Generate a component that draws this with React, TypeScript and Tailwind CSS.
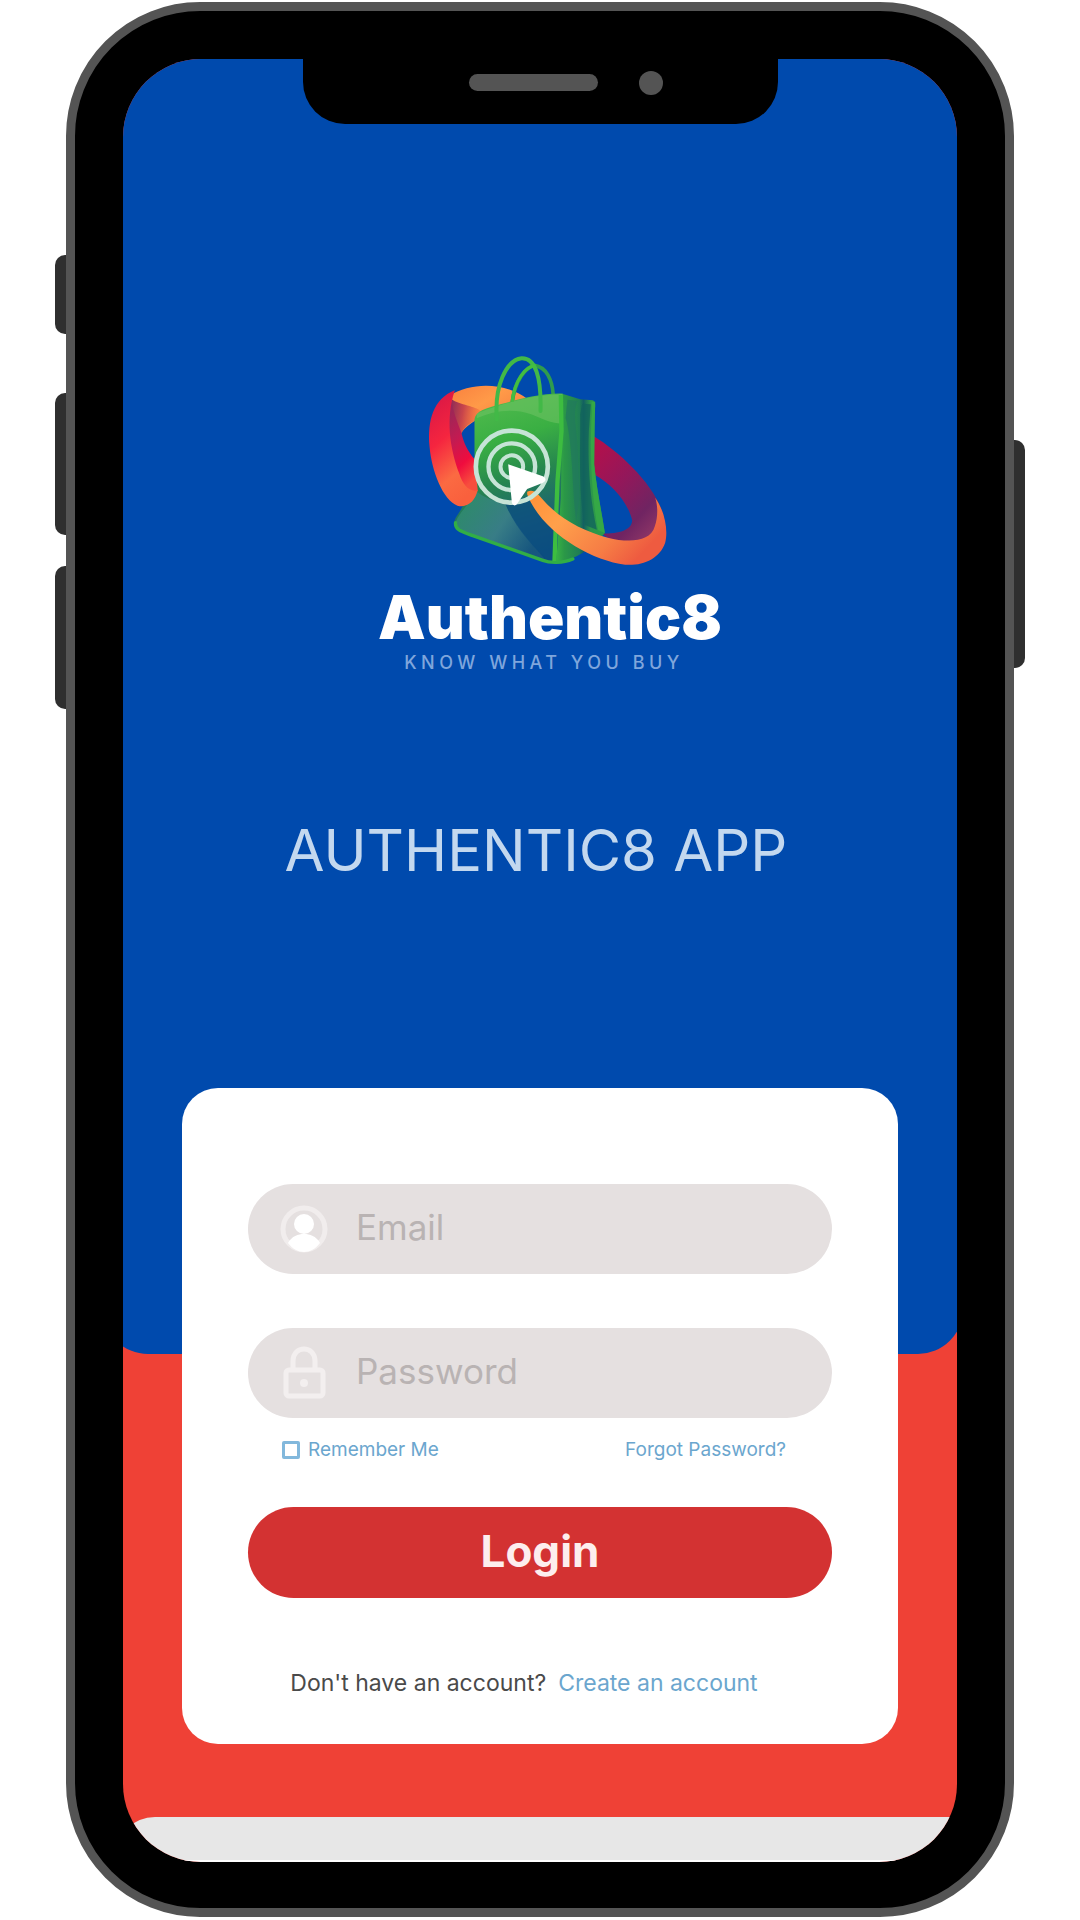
import React from "react";

function BrandMark() {
  return (
    <svg viewBox="200 60 740 651" className="h-[217px] w-[247px]" role="img" aria-label="Shopping bag with a click target and an orbiting ribbon">
      <defs>
        <linearGradient id="ringTop" x1="0" y1="0" x2="1" y2="1">
          <stop offset="0" stopColor="#f9803f" />
          <stop offset="0.4" stopColor="#ff9a48" />
          <stop offset="1" stopColor="#f1703e" />
        </linearGradient>
        <linearGradient id="ringShade" x1="0" y1="0" x2="1" y2="0.2">
          <stop offset="0" stopColor="#8e2c56" />
          <stop offset="0.45" stopColor="#c9454b" />
          <stop offset="1" stopColor="#f1663e" stopOpacity="0.4" />
        </linearGradient>
        <linearGradient id="ringLeft" x1="0.2" y1="0" x2="0.55" y2="1">
          <stop offset="0" stopColor="#d81746" />
          <stop offset="0.4" stopColor="#f5253f" />
          <stop offset="0.75" stopColor="#fb6a42" />
          <stop offset="1" stopColor="#f9603d" />
        </linearGradient>
        <linearGradient id="ringInner" x1="0" y1="0" x2="0.3" y2="1">
          <stop offset="0" stopColor="#8b2c58" />
          <stop offset="0.45" stopColor="#c21b52" />
          <stop offset="0.75" stopColor="#ef0c3e" />
          <stop offset="1" stopColor="#f84d3d" />
        </linearGradient>
        <linearGradient id="ringRight" x1="0" y1="0" x2="0.7" y2="1">
          <stop offset="0" stopColor="#b80f49" />
          <stop offset="0.45" stopColor="#94175a" />
          <stop offset="0.8" stopColor="#702462" />
          <stop offset="1" stopColor="#8c3566" />
        </linearGradient>
        <linearGradient id="ringFront" x1="0" y1="0" x2="1" y2="0.5">
          <stop offset="0" stopColor="#ff8f35" />
          <stop offset="0.35" stopColor="#ffa04b" />
          <stop offset="0.75" stopColor="#f67d45" />
          <stop offset="1" stopColor="#ee5b40" />
        </linearGradient>
        <linearGradient id="bagFront" x1="0.35" y1="0" x2="0.55" y2="1">
          <stop offset="0" stopColor="#52bb4e" />
          <stop offset="0.28" stopColor="#3aaf43" />
          <stop offset="0.52" stopColor="#26864f" />
          <stop offset="0.8" stopColor="#1c6077" />
          <stop offset="1" stopColor="#0c4c80" />
        </linearGradient>
        <linearGradient id="bagSide" x1="0" y1="0" x2="1" y2="0">
          <stop offset="0" stopColor="#3cb944" />
          <stop offset="0.2" stopColor="#2b9847" />
          <stop offset="0.5" stopColor="#207e55" />
          <stop offset="0.58" stopColor="#136062" />
          <stop offset="0.72" stopColor="#2d964b" />
          <stop offset="1" stopColor="#2b9b49" />
        </linearGradient>
        <linearGradient id="bagFold" x1="0" y1="0" x2="1" y2="0.5">
          <stop offset="0" stopColor="#2c8f65" />
          <stop offset="0.6" stopColor="#3b8088" />
          <stop offset="1" stopColor="#18577f" />
        </linearGradient>
      </defs>

      {/* far side of the ribbon */}
      <path d="M268 195C340 150 440 155 505 205L400 235L345 270C330 280 318 288 306 304C275 280 265 235 268 195Z" fill="url(#ringTop)" />
      <path d="M276 205C300 222 350 226 362 240L350 268C330 276 314 288 306 308C288 290 276 258 276 205Z" fill="url(#ringShade)" />
      <path d="M703 316C775 360 875 450 908 540C928 600 900 642 850 640C800 642 755 632 728 608C780 608 817 598 818 568C806 515 758 460 703 430Z" fill="url(#ringRight)" />

      {/* back handle */}
      <path d="M458 215C466 150 495 112 525 103C560 108 578 145 581 190" fill="none" stroke="#2f9c4d" strokeWidth="11" />

      {/* bag */}
      <path d="M608 188L662 205L700 208C710 211 708 228 704 245L704 400C712 480 728 550 736 606C700 650 650 687 584 697Z" fill="url(#bagSide)" />
      <path d="M624 206L654 210C640 240 650 290 654 340L660 500L650 570C638 480 640 330 618 260Z" fill="#21795c" opacity="0.75" />
      <path d="M668 218L694 220L688 300C684 380 690 500 712 596L676 582C654 480 664 330 662 250Z" fill="#12645c" opacity="0.8" />
      <path d="M696 212L707 212L704 400C712 480 728 550 736 606L716 598C696 500 690 360 697 240Z" fill="#35a846" />
      <path d="M345 265C348 240 380 231 425 219C480 205 545 186 610 188L604 500L590 697L545 690L312 606C284 596 278 574 292 555C330 500 345 440 345 370Z" fill="url(#bagFront)" />
      <path d="M352 248C400 228 510 190 608 190L608 278C570 276 545 262 515 250C460 230 400 240 352 262Z" fill="#70c264" opacity="0.55" />
      <path d="M350 480C326 525 290 555 287 580C288 598 310 604 335 612L560 690C520 640 470 590 438 520C410 510 370 500 350 480Z" fill="url(#bagFold)" opacity="0.9" />
      <path d="M438 520C468 590 520 650 570 690L584 560L520 490Z" fill="#0b4d80" opacity="0.75" />
      <path d="M288 575C286 598 310 603 340 614L550 688C570 696 610 697 640 684" fill="none" stroke="#31ae46" strokeWidth="10" strokeLinecap="round" />
      <path d="M604 192L606 300L594 450L585 690" fill="none" stroke="#3dbd40" strokeWidth="13" />

      {/* front handle */}
      <path d="M412 265C404 165 440 88 486 82C528 80 546 140 543 240" fill="none" stroke="#42b947" strokeWidth="12" strokeLinecap="round" />
      <path d="M458 212C466 145 500 105 528 104" fill="none" stroke="#43bd42" strokeWidth="10" />

      {/* left loop of the ribbon */}
      <path d="M276 205C280 240 292 270 306 306C312 335 325 360 345 385L355 480C330 500 310 500 292 470C268 400 252 290 276 205Z" fill="url(#ringInner)" />
      <path d="M286 178C220 204 204 270 210 345C216 420 250 507 294 524C326 532 348 508 354 478C330 484 310 462 300 430C270 350 258 262 286 178Z" fill="url(#ringLeft)" />

      {/* near side of the ribbon */}
      <path d="M503 482C520 474 532 484 545 500C600 565 670 600 745 620C805 635 872 635 886 586C895 560 896 525 887 500C918 545 926 600 917 635C900 684 850 705 797 701C690 688 545 600 503 490Z" fill="url(#ringFront)" />

      {/* click target and pointer */}
      <g fill="none" stroke="#c6e4d6" strokeWidth="13">
        <circle cx="457" cy="407" r="108" strokeWidth="14" />
        <circle cx="457" cy="407" r="70" />
        <circle cx="457" cy="407" r="34" strokeWidth="12" />
      </g>
      <path d="M446 400L550 436C562 442 560 452 549 456L503 474L474 517C468 527 458 524 457 514Z" fill="#fff" />
    </svg>
  );
}

function UserIcon() {
  return (
    <svg viewBox="0 0 48 48" className="size-12 shrink-0" fill="none" aria-hidden="true">
      <circle cx="24" cy="24" r="21" stroke="#f1eded" strokeWidth="5" />
      <circle cx="24" cy="19" r="10" fill="#fff" />
      <path d="M8 38C12 31 18 29 24 29C30 29 36 31 40 38C31 50 17 50 8 38Z" fill="#fff" />
    </svg>
  );
}

function LockIcon() {
  return (
    <svg viewBox="0 0 48 54" className="h-[54px] w-12 shrink-0" fill="none" stroke="#f3efef" strokeWidth="5" aria-hidden="true">
      <path d="M13 24V15C13 -1 35 -1 35 15V24" />
      <rect x="6" y="24" width="37" height="26" rx="3" />
      <circle cx="24" cy="37" r="4" fill="#f3efef" stroke="none" />
    </svg>
  );
}

type FieldProps = { id: string; label: string; type: string; icon: React.ReactNode };

function Field({ id, label, type, icon }: FieldProps) {
  return (
    <div className="flex h-[90px] items-center gap-7 rounded-full bg-[#e5e0e0] px-8">
      <label htmlFor={id} aria-label={label} className="flex">
        {icon}
      </label>
      <input
        id={id}
        type={type}
        aria-label={label}
        placeholder={label}
        className="min-w-0 flex-1 bg-transparent pb-1 text-[35px] leading-10 text-[#8c8686] outline-none placeholder:text-[#b9b3b3]"
      />
    </div>
  );
}

export default function App() {
  return (
    <main className="min-h-screen bg-white px-[66px] py-0.5 font-['Inter','Liberation_Sans',sans-serif]">
      <div className="relative rounded-[134px] border-[9px] border-[#545454] bg-black px-12 pt-12 pb-[46px]">
        {/* hardware keys */}
        <span className="absolute top-[244px] -left-5 h-[79px] w-[11px] rounded-l-[10px] bg-[#2f2f2f]" />
        <span className="absolute top-[382px] -left-5 h-[142px] w-[11px] rounded-l-[10px] bg-[#2f2f2f]" />
        <span className="absolute top-[555px] -left-5 h-[143px] w-[11px] rounded-l-[10px] bg-[#2f2f2f]" />
        <span className="absolute top-[429px] -right-5 h-[228px] w-[11px] rounded-r-[10px] bg-[#2f2f2f]" />

        {/* notch */}
        <div className="absolute inset-x-0 top-12 z-10 mx-auto flex h-[65px] w-[475px] justify-end gap-[41px] rounded-b-[42px] bg-black pt-3 pr-[115px]">
          <span className="mt-[3px] h-[17px] w-[129px] rounded-full bg-[#545454]" />
          <span className="size-6 rounded-full bg-[#545454]" />
        </div>

        <div className="overflow-hidden rounded-[78px] bg-[#ef4136]">
          <header className="-mr-1.5 -ml-5 flex flex-col items-center rounded-b-[45px] bg-[#004aad] pt-[292px] pr-2.5 pb-[472px] pl-4 text-white">
            <div className="flex flex-col items-center pl-7">
              <BrandMark />
              <p className="mt-[21px] text-[60px] leading-14 font-black">Authentic8</p>
              <p className="mt-1.5 pr-3 text-[18px] leading-6 font-medium tracking-[0.25em] text-[#7fa6dc]">KNOW WHAT YOU BUY</p>
            </div>
            <h1 className="mt-[143px] text-[58px] leading-16 text-[#c3d8ef]">AUTHENTIC8 APP</h1>
          </header>

          <form
            className="relative mx-[59px] -mt-[266px] rounded-[36px] bg-white px-[66px] pt-[96px] pb-[45px]"
            onSubmit={(event) => event.preventDefault()}
          >
            <div className="flex flex-col gap-[54px]">
              <Field id="email" label="Email" type="email" icon={<UserIcon />} />
              <Field id="password" label="Password" type="password" icon={<LockIcon />} />
            </div>

            <div className="mb-[25px] flex h-16 items-center justify-between pr-[46px] pl-[34px] text-[19px] leading-6 text-[#6ba6ce]">
              <label className="flex items-center gap-2">
                <input type="checkbox" className="size-[18px] appearance-none rounded-xs border-[3px] border-[#82b8dc] checked:bg-[#6ba6ce]" />
                Remember Me
              </label>
              <a href="#forgot">Forgot Password?</a>
            </div>

            <button type="submit" className="h-[91px] w-full rounded-full bg-[#d33232] pb-1 text-[44px] font-bold text-[#fdeeee]">
              Login
            </button>

            <p className="mt-[69px] flex justify-center gap-3 pr-8 text-[23px] leading-8 whitespace-nowrap text-[#4a4a4a]">
              <span>Don't have an account?</span>
              <a href="#create" className="text-[#6ba6ce]">Create an account</a>
            </p>
          </form>

          <footer className="mt-[73px] -ml-2 h-[45px] rounded-tl-[40px] border-b-2 border-white bg-[#e7e7e7]" />
        </div>
      </div>
    </main>
  );
}
